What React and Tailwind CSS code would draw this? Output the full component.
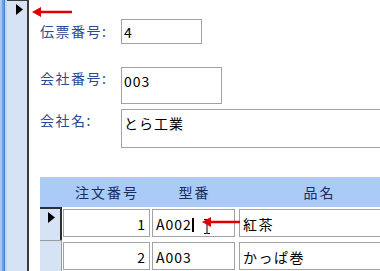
import React from "react";

const font = { fontFamily: '"Noto Sans CJK JP", "Noto Sans", sans-serif' };

function RedArrow({ className, width }) {
  return (
    <svg className={className} width={width} height="12" viewBox={`0 0 ${width} 12`}>
      <line x1="5" y1="6" x2={width} y2="6" stroke="#e00000" strokeWidth="2.5" />
      <polygon points="0,6 9,1 9,11" fill="#e00000" />
    </svg>
  );
}

function Triangle({ className }) {
  return (
    <svg className={className} width="7" height="11" viewBox="0 0 7 11">
      <polygon points="0,0 7,5.5 0,11" fill="#000" />
    </svg>
  );
}

function IBeam({ className }) {
  return (
    <svg className={className} width="8" height="15" viewBox="0 0 8 15">
      <path d="M1 0.5h2.5l0.5 0.6l0.5-0.6h2.5M4 1v13M1 14.5h2.5l0.5-0.6l0.5 0.6h2.5" stroke="#000" strokeWidth="1" fill="none" />
    </svg>
  );
}

function Field({ label, value, boxClass, labelClass }) {
  return (
    <div className="flex">
      <div className={`w-[81px] text-[14px] tracking-[1.5px] text-[#2b4a93] ${labelClass}`}>{label}</div>
      <div className={`border border-[#a3a3a3] bg-white pl-[2px] text-[14px] tracking-[1px] leading-[18px] text-black ${boxClass}`}>
        {value}
      </div>
    </div>
  );
}

export default function App() {
  return (
    <div className="relative flex h-[271px] w-[380px] overflow-hidden bg-white" style={font}>
      {/* window border */}
      <div className="flex h-full">
        <div className="w-[2px] bg-[#a8c6f0]" />
        <div className="w-[2px] bg-[#6e9de2]" />
        <div className="w-[1px] bg-[#4f7fcb]" />
        <div className="w-[2px] bg-[#c3d7f3]" />
      </div>

      <div className="flex flex-1 flex-col">
        <div className="h-[3px] bg-[#bdd4f4]" />
        <div className="flex flex-1">
          {/* record selector */}
          <div className="flex w-[22px] flex-col border-r-2 border-t border-[#3c3c3c] bg-[#d5e3f5]">
            <Triangle className="ml-[9px] mt-[3px]" />
          </div>

          {/* form body */}
          <div className="flex flex-1 flex-col pl-[11px] pt-[19px]">
            <Field label="伝票番号:" value="4" boxClass="h-[25px] w-[81px] pt-[3px]" labelClass="pt-[2px]" />
            <div className="h-[23px]" />
            <Field label="会社番号:" value="003" boxClass="h-[37px] w-[101px] pt-[4px]" labelClass="pt-[1px]" />
            <div className="h-[5px]" />
            <Field label="会社名:" value="とら工業" boxClass="h-[39px] w-[300px] pt-[4px]" labelClass="pt-[1px]" />

            {/* subform */}
            <div className="mt-[29px] flex flex-col border-t border-[#c8c8c8]">
              <div className="flex h-[29px] items-center bg-[#aacbf6] text-[14px] tracking-[2px] text-[#1c2a5c]">
                <div className="w-[23px]" />
                <div className="w-[88px] text-center">注文番号</div>
                <div className="w-[87px] text-center">型番</div>
                <div className="flex-1 pr-[20px] text-center">品名</div>
              </div>

              {/* row 1 */}
              <div className="flex h-[33px]">
                <div className="flex w-[22px] border-r-2 border-t-2 border-[#2e2e2e] bg-[#d5e3f5]">
                  <Triangle className="ml-[8px] mt-[3px]" />
                </div>
                <div className="flex flex-1 pt-[2px] pl-[1px] text-[14px] leading-[18px] text-black">
                  <div className="h-[28px] w-[87px] border border-[#a3a3a3] pr-[4px] pt-[5px] text-right">1</div>
                  <div className="ml-[2px] h-[28px] w-[83px] border border-[#a3a3a3] pl-[3px] pt-[5px] tracking-[1px]">
                    A002<span className="inline-block h-[14px] w-[2px] translate-y-[2px] bg-black" />
                  </div>
                  <div className="ml-[4px] h-[28px] flex-1 border border-[#a3a3a3] pl-[3px] pt-[5px] tracking-[1.5px]">紅茶</div>
                </div>
              </div>

              {/* row 2 */}
              <div className="flex h-[40px]">
                <div className="w-[22px] border-r border-t border-[#9a9a9a] bg-[#d5e3f5]" />
                <div className="flex flex-1 pt-[2px] pl-[1px] text-[14px] leading-[18px] text-black">
                  <div className="h-[28px] w-[87px] border border-[#a3a3a3] pr-[4px] pt-[5px] text-right">2</div>
                  <div className="ml-[2px] h-[28px] w-[83px] border border-[#a3a3a3] pl-[3px] pt-[5px] tracking-[1px]">A003</div>
                  <div className="ml-[4px] h-[28px] flex-1 border border-[#a3a3a3] pl-[3px] pt-[5px] tracking-[1.5px]">かっぱ巻</div>
                </div>
              </div>
            </div>
          </div>
        </div>
      </div>

      {/* annotations */}
      <RedArrow className="absolute left-[32px] top-[6px]" width={40} />
      <IBeam className="absolute left-[203px] top-[219px]" />
      <RedArrow className="absolute left-[202px] top-[216px]" width={38} />
    </div>
  );
}
